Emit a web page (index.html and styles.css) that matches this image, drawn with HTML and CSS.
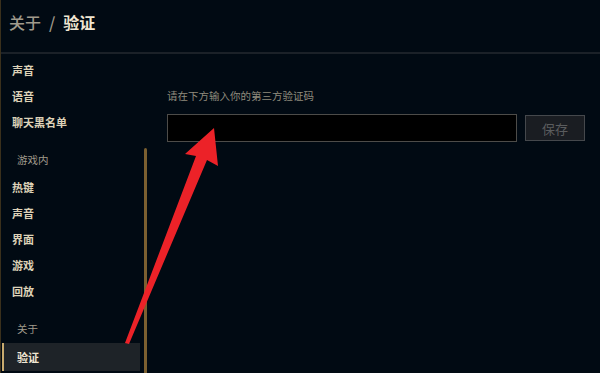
FILE: index.html
```html
<!DOCTYPE html>
<html lang="zh">
<head>
  <meta charset="UTF-8">
  <title>关于 / 验证</title>
  <link rel="stylesheet" href="styles.css">
</head>
<body>
  <div class="page">
    <div class="top">
      <span class="crumb">关于</span>
      <span class="sep">/</span>
      <span class="now">验证</span>
    </div>
    <div class="main">
      <div class="side">
        <ul class="menu">
          <li class="item">声音</li>
          <li class="item">语音</li>
          <li class="item">聊天黑名单</li>
          <li class="cat">游戏内</li>
          <li class="item">热键</li>
          <li class="item">声音</li>
          <li class="item">界面</li>
          <li class="item">游戏</li>
          <li class="item">回放</li>
          <li class="cat">关于</li>
          <li class="item active">验证</li>
        </ul>
        <div class="track"></div>
      </div>
      <div class="content">
        <p class="label">请在下方输入你的第三方验证码</p>
        <div class="row">
          <input class="code" type="text">
          <button class="save">保存</button>
        </div>
      </div>
    </div>
    <svg class="arrow" width="600" height="373" viewBox="0 0 600 373">
      <polygon points="214,128 218,166 207,160 129,344 125,343 196,156 185,154" fill="#ec2228"/>
    </svg>
  </div>
</body>
</html>
```

FILE: styles.css
```css
* {
  margin: 0;
  padding: 0;
  box-sizing: border-box;
}
body {
  background-color: #010a13;
  font-family: "Noto Sans CJK SC", "Noto Sans", sans-serif;
  width: 600px;
  height: 373px;
  overflow: hidden;
}
.page {
  position: relative;
  height: 373px;
  border-left: 1px solid #3a301c;
}
.top {
  height: 54px;
  padding: 12px 0 0 8px;
  font-size: 16px;
  line-height: 20px;
  border-bottom: 2px solid #1b2128;
  display: flex;
  gap: 8px;
}
.crumb,
.sep {
  color: #a09b8c;
  font-weight: 500;
}
.now {
  color: #f0e6d2;
  font-weight: 700;
}
.main {
  display: flex;
  height: 319px;
}
.side {
  width: 149px;
  display: flex;
}
.menu {
  list-style: none;
  width: 139px;
  padding-top: 3px;
}
.item {
  height: 26px;
  line-height: 26px;
  padding-left: 11px;
  font-size: 11px;
  font-weight: 700;
  color: #ddd2b8;
}
.cat {
  margin-top: 11px;
  height: 28px;
  line-height: 28px;
  padding-left: 16px;
  font-size: 10.5px;
  color: #a09b8c;
}
.item.active {
  height: 28px;
  line-height: 28px;
  margin-left: 1px;
  padding-left: 13px;
  border-left: 2px solid #c8aa6e;
  background-color: #1e2328;
  color: #f0e6d2;
}
.track {
  width: 3px;
  margin: 94px 0 0 4px;
  background-color: #7b5f30;
  border-radius: 2px 2px 0 0;
}
.content {
  margin-left: 17px;
  padding-top: 35px;
}
.label {
  font-size: 10.5px;
  line-height: 14px;
  color: #8f8a7d;
}
.row {
  display: flex;
  margin-top: 11px;
}
.code {
  width: 350px;
  height: 28px;
  background-color: #000;
  border: 1px solid #4d4c49;
  outline: none;
}
.save {
  width: 60px;
  height: 26px;
  margin: 1px 0 0 8px;
  background-color: #1a1d22;
  border: 1px solid #45484c;
  color: #5a5c5e;
  font-family: inherit;
  font-size: 13px;
}
.arrow {
  position: absolute;
  left: -1px;
  top: 0;
}
```
